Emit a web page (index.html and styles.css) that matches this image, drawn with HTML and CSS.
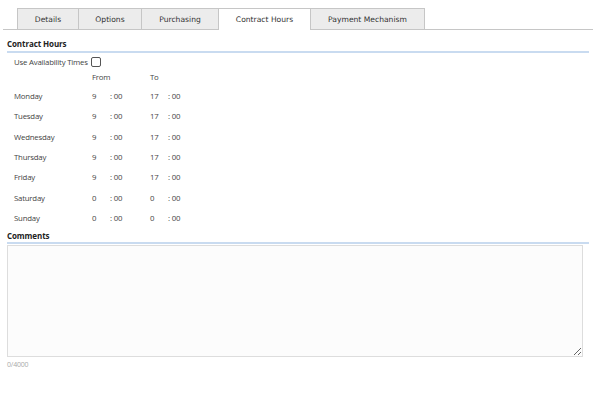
FILE: index.html
```html
<!DOCTYPE html>
<html>
<head>
<meta charset="utf-8">
<link rel="stylesheet" href="styles.css">
</head>
<body>
<div class="tabs">
  <div class="tab t1">Details</div>
  <div class="tab t2">Options</div>
  <div class="tab t3">Purchasing</div>
  <div class="tab t4 active">Contract Hours</div>
  <div class="tab t5">Payment Mechanism</div>
</div>
<div class="content">
  <div class="section-title">Contract Hours</div>
  <div class="avail"><span>Use Availability Times</span><span class="checkbox"></span></div>
  <div class="grid">
    <div class="row head"><span class="label"></span><span class="h">From</span><span class="m"></span><span class="h">To</span><span class="m"></span></div>
    <div class="row"><span class="label">Monday</span><span class="h">9</span><span class="m">: 00</span><span class="h">17</span><span class="m">: 00</span></div>
    <div class="row"><span class="label">Tuesday</span><span class="h">9</span><span class="m">: 00</span><span class="h">17</span><span class="m">: 00</span></div>
    <div class="row"><span class="label">Wednesday</span><span class="h">9</span><span class="m">: 00</span><span class="h">17</span><span class="m">: 00</span></div>
    <div class="row"><span class="label">Thursday</span><span class="h">9</span><span class="m">: 00</span><span class="h">17</span><span class="m">: 00</span></div>
    <div class="row"><span class="label">Friday</span><span class="h">9</span><span class="m">: 00</span><span class="h">17</span><span class="m">: 00</span></div>
    <div class="row"><span class="label">Saturday</span><span class="h">0</span><span class="m">: 00</span><span class="h">0</span><span class="m">: 00</span></div>
    <div class="row"><span class="label">Sunday</span><span class="h">0</span><span class="m">: 00</span><span class="h">0</span><span class="m">: 00</span></div>
  </div>
  <div class="section-title comments-title">Comments</div>
  <textarea class="comments"></textarea>
  <div class="counter">0/4000</div>
</div>
</body>
</html>
```
FILE: styles.css
```css
html, body {
  margin: 0;
  padding: 0;
  background: #ffffff;
}
body {
  font-family: "Open Sans", "Liberation Sans", sans-serif;
  font-size: 7.8px;
  letter-spacing: -0.2px;
  color: #444444;
}
.tabs {
  display: flex;
  margin: 8px 7px 0 3px;
  padding-left: 14px;
  border-bottom: 1px solid #c6c6c6;
  height: 21px;
}
.tab {
  box-sizing: border-box;
  height: 21px;
  border: 1px solid #c6c6c6;
  border-bottom: none;
  border-right: none;
  background: #ececec;
  display: flex;
  align-items: center;
  justify-content: center;
  font-family: "DejaVu Sans", sans-serif;
  font-size: 7.6px;
  letter-spacing: 0;
  color: #333;
}
.tab.t5 { border-right: 1px solid #c6c6c6; }
.tab.active {
  background: #ffffff;
  height: 22px;
  margin-bottom: -1px;
}
.t1 { width: 61px; }
.t2 { width: 63px; }
.t3 { width: 77px; }
.t4 { width: 92px; }
.t5 { width: 115px; }
.content {
  padding: 0 11px 0 7px;
}
.section-title {
  font-weight: bold;
  font-size: 8px;
  letter-spacing: -0.1px;
  color: #222;
  margin-top: 8px;
  padding-bottom: 2px;
  border-bottom: 2px solid #c9dbf0;
  line-height: 11px;
}
.avail {
  display: flex;
  align-items: center;
  gap: 3px;
  margin: 3px 0 0 7px;
  height: 11px;
}
.checkbox {
  width: 8px;
  height: 8px;
  border: 1px solid #555;
  border-radius: 2px;
  background: #fff;
}
.grid {
  margin-left: 7px;
  margin-top: 4px;
}
.row {
  display: flex;
  height: 20.3px;
  align-items: center;
}
.row.head {
  height: 11px;
  margin-bottom: 4px;
}
.label { width: 78px; }
.h { width: 18px; }
.m { width: 40px; }
.comments-title {
  margin-top: 2px;
  padding-bottom: 1px;
}
.comments {
  display: block;
  box-sizing: border-box;
  width: 576px;
  height: 112px;
  margin: 1px 0 0 0;
  border: 1px solid #dddddd;
  background: #fcfcfc;
  resize: both;
  padding: 2px;
}
.counter {
  font-size: 7px;
  color: #aaaaaa;
  margin-top: 3px;
}
```
